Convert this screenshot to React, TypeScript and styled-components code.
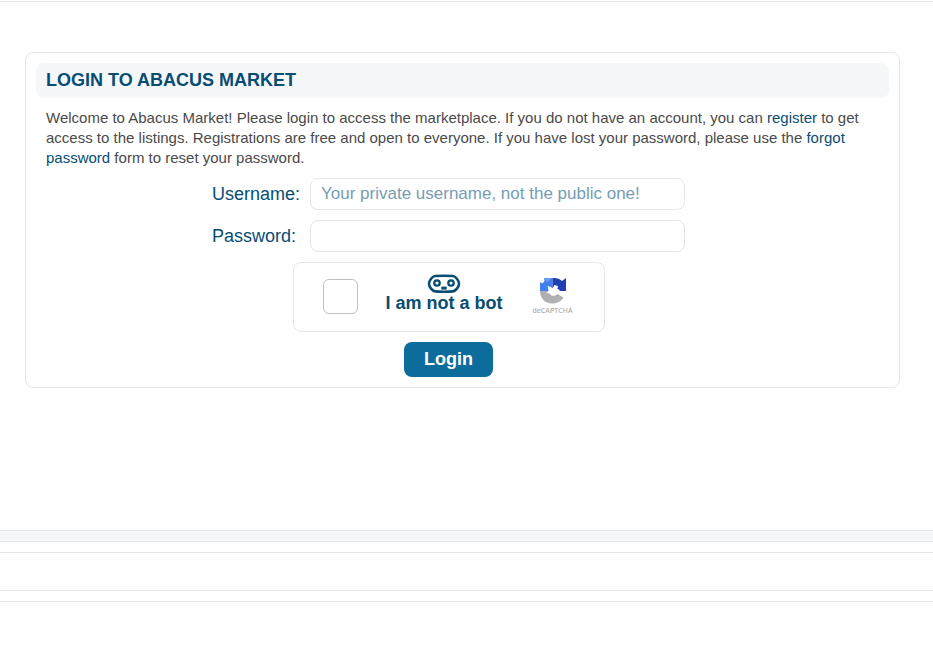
import React from "react";
import styled, { createGlobalStyle } from "styled-components";

const line = "#e5e6e9";
const navy = "#074d73";

const GlobalStyle = createGlobalStyle`
  *, *::before, *::after { box-sizing: border-box; }
  body {
    margin: 0;
    background: #fff;
    color: #4a4a4a;
    font-family: "Liberation Sans", Arial, sans-serif;
    font-size: 15px;
    line-height: 20px;
  }
`;

const Page = styled.div`
  display: flex;
  flex-direction: column;
`;

const Main = styled.main`
  margin-top: 1px;
  border-top: 1px solid ${line};
  padding: 50px 33px 0 25px;
  min-height: 529px;
`;

const Card = styled.section`
  border: 1px solid ${line};
  border-radius: 8px;
  padding: 10px;
`;

const Title = styled.h1`
  margin: 0;
  padding: 0 10px;
  border-radius: 8px;
  background: #f6f7f9;
  color: ${navy};
  font-size: 18px;
  line-height: 35px;
  text-transform: uppercase;
`;

const Intro = styled.p`
  margin: 10px;
`;

const TextLink = styled.a`
  color: ${navy};
  text-decoration: none;
`;

const Form = styled.form`
  display: flex;
  flex-direction: column;
  align-items: center;
  gap: 10px;
  padding-right: 28px;
`;

const Field = styled.div`
  display: grid;
  grid-template-columns: 98px minmax(0, 375px);
  align-items: center;
`;

const Label = styled.label`
  color: ${navy};
  font-size: 18px;
`;

const TextInput = styled.input`
  width: 100%;
  height: 32px;
  padding: 0 10px;
  border: 1px solid ${line};
  border-radius: 8px;
  background: #fff;
  color: ${navy};
  font-family: inherit;
  font-size: 17px;
  &::placeholder {
    color: #759db4;
    opacity: 1;
  }
`;

const Captcha = styled.div`
  display: flex;
  align-items: center;
  width: 312px;
  height: 70px;
  padding: 0 29px 2px;
  border: 1px solid ${line};
  border-radius: 8px;
`;

const Check = styled.input`
  appearance: none;
  flex: none;
  width: 35px;
  height: 35px;
  margin: 0;
  border: 1px solid #bfc0c2;
  border-radius: 6px;
  background: #fff;
  &:checked { background: ${navy}; }
`;

const BotLabel = styled.label`
  display: flex;
  flex: 1;
  flex-direction: column;
  align-items: center;
  color: ${navy};
  font-size: 18px;
  font-weight: bold;
  white-space: nowrap;
  padding-bottom: 5px;
`;

const Brand = styled.div`
  display: flex;
  flex-direction: column;
  align-items: center;
  gap: 2px;
  width: 44px;
  color: #b0b0b0;
  font-family: "Open Sans", sans-serif;
  font-size: 7px;
  font-weight: 600;
  line-height: 10px;
`;

const Submit = styled.button`
  height: 35px;
  padding: 0 20px;
  border: 0;
  border-radius: 8px;
  background: #0c6d9c;
  color: #fff;
  font-family: inherit;
  font-size: 18px;
  font-weight: bold;
`;

const Footer = styled.footer`
  display: flex;
  flex-direction: column;
  gap: 10px;
  padding-bottom: 48px;
`;

const Band = styled.div`
  height: 12px;
  border: 1px solid ${line};
  border-width: 1px 0;
  background: #f6f7f9;
`;

const FooterBar = styled.div`
  height: 39px;
  border: 1px solid ${line};
  border-width: 1px 0;
`;

const FooterEnd = styled.div`
  border-top: 1px solid ${line};
`;

function BotIcon() {
  return (
    <svg width="34" height="19" viewBox="0 0 34 19" fill="none" aria-hidden="true">
      <path
        d="M8 2Q17 1.4 26 2C28.500 2.200 32 6.500 32 9.700S28.500 17.200 26 17.400Q17 18 8 17.400C5.500 17.200 2 12.900 2 9.700S5.500 2.200 8 2Z"
        stroke={navy}
        strokeWidth="2.6"
      />
      <circle cx="10" cy="9" r="2.700" stroke={navy} strokeWidth="2.300" />
      <circle cx="24" cy="9" r="2.700" stroke={navy} strokeWidth="2.300" />
      <path d="M14.300 12.600h5.400v3h-5.400Z" fill={navy} />
    </svg>
  );
}

function CaptchaLogo() {
  return (
    <svg width="28" height="28" viewBox="1 0 28 28" aria-hidden="true">
      <path d="M2 15V6l2.500 1.500L6.500 5 6 2H14.500v10H10.500v3Z" fill="#4280ee" />
      <path d="M6 2h8.500L9 6Z" fill="#6b9cf3" />
      <path d="M14.500 2C18 1.500 21.500 2.500 24 5L28 2v13H18l-3.500-3Z" fill="#1f3fb2" />
      <path d="M2 15h9l1.500 3.500c2.500 2 5 1.500 7-.500l6 3.500C23 25.500 18.500 27.500 14 27.500 7 27.500 2 22 2 15Z" fill="#b0b0b2" />
      <path d="m9.500 10 3.500 1 1.500 1.500 2-3.500 3.500 1-.500 3 2.500 1-3 3-3 .500-2 2.500-2-2.500-3.500-.500 2.500-2.500Z" fill="#fff" />
    </svg>
  );
}

export default function App() {
  return (
    <Page>
      <GlobalStyle />
      <Main>
        <Card>
          <Title>Login to Abacus Market</Title>
          <Intro>
            Welcome to Abacus Market! Please login to access the marketplace. If you do not have an
            account, you can <TextLink href="#register">register</TextLink> to get access to the
            listings. Registrations are free and open to everyone. If you have lost your password,
            please use the <TextLink href="#forgot">forgot password</TextLink> form to reset your
            password.
          </Intro>
          <Form onSubmit={(event: React.FormEvent) => event.preventDefault()}>
            <Field>
              <Label htmlFor="username">Username:</Label>
              <TextInput
                id="username"
                type="text"
                placeholder="Your private username, not the public one!"
              />
            </Field>
            <Field>
              <Label htmlFor="password">Password:</Label>
              <TextInput id="password" type="password" />
            </Field>
            <Captcha>
              <Check id="human" type="checkbox" />
              <BotLabel htmlFor="human">
                <BotIcon />
                I am not a bot
              </BotLabel>
              <Brand>
                <CaptchaLogo />
                deCAPTCHA
              </Brand>
            </Captcha>
            <Submit type="submit">Login</Submit>
          </Form>
        </Card>
      </Main>
      <Footer>
        <Band />
        <FooterBar />
        <FooterEnd />
      </Footer>
    </Page>
  );
}
